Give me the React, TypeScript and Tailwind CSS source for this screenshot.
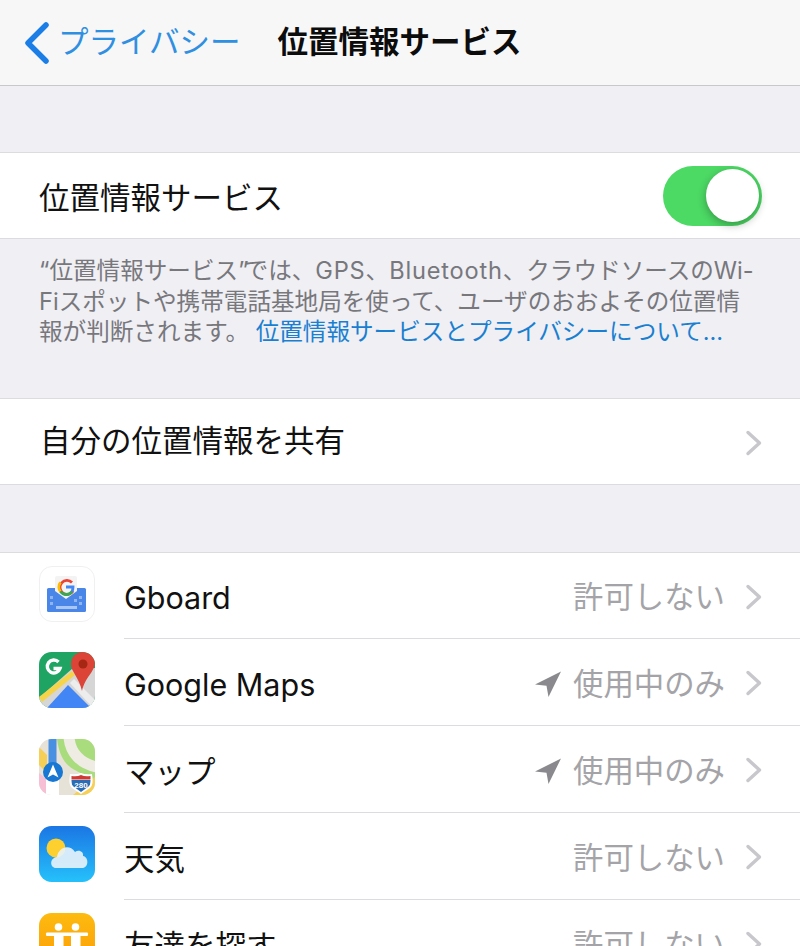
import { ReactNode } from 'react';

const fontStack = { fontFamily: 'Inter, "Noto Sans CJK JP", sans-serif' };

function Chevron() {
  return (
    <svg width="18" height="26" viewBox="0 0 18 26" className="mt-[2px] shrink-0">
      <path d="M3 2.5 L14.5 13 L3 23.5" fill="none" stroke="#c7c7cc" strokeWidth="3.4" strokeLinecap="round" strokeLinejoin="round" />
    </svg>
  );
}

function LocationArrow() {
  return (
    <svg width="28" height="28" viewBox="0 0 28 28" className="shrink-0">
      <path d="M27 1.5 L1 14.5 L12.5 15.8 L14.5 27 Z" fill="#8a8a8e" />
    </svg>
  );
}

function GboardIcon() {
  return (
    <svg width="56" height="56" viewBox="0 0 56 56" className="block">
      <rect x="0.5" y="0.5" width="55" height="55" rx="12.5" fill="#fff" stroke="#f0f0f0" />
      <rect x="8" y="22" width="39" height="24" rx="1.5" fill="#4a86e8" />
      <path d="M16 12 Q16 10 18 10 H36 Q38 10 38 12 V25 L27 33 L16 25 Z" fill="#f3f3f3" />
      <path d="M33 16.500 A7 7 0 1 0 34 25" fill="none" stroke="#ea4335" strokeWidth="2.800" />
      <path d="M21.500 16.500 A7 7 0 0 0 21.500 25.500" fill="none" stroke="#fbbc05" strokeWidth="2.800" />
      <path d="M21.500 25.500 A7 7 0 0 0 33 25.500" fill="none" stroke="#34a853" strokeWidth="2.800" />
      <path d="M27 21 H34 Q34 23.500 33 25.500" fill="none" stroke="#4285f4" strokeWidth="2.800" />
      <g fill="#8fb4ee">
        <rect x="11" y="30" width="3" height="3" />
        <rect x="40" y="30" width="3" height="3" />
        <rect x="35" y="33" width="3" height="3" />
        <rect x="11" y="36" width="3" height="3" />
        <rect x="40" y="36" width="3" height="3" />
      </g>
      <rect x="17" y="40" width="21" height="3" fill="#a9c6f4" />
    </svg>
  );
}

function MapsIcon() {
  return (
    <svg width="56" height="56" viewBox="0 0 56 56" className="block">
      <defs>
        <clipPath id="maps-clip"><rect width="56" height="56" rx="12.500" /></clipPath>
      </defs>
      <g clipPath="url(#maps-clip)">
        <rect width="56" height="56" fill="#1fa463" />
        <path d="M0 56 V46 L34 16 H56 V56 Z" fill="#d6d6d6" />
        <path d="M8 56 L29 33 L52 56 Z" fill="#4285f4" />
        <path d="M0 45 L33 19 L36 23 L3 50 Z" fill="#f6d44a" />
        <path d="M31 31 L35 27 L56 48 V56 H54 Z" fill="#ededed" />
        <path d="M44 0 C36 0 32 6 32 12 C32 20 40 25 43 39 C46 25 56 20 56 10 C56 4 51 0 44 0 Z" fill="#db4437" />
        <circle cx="44" cy="12" r="4.500" fill="#a52714" />
        <path d="M19.500 10 A6.500 6.500 0 1 0 21 16.500 H14.500" fill="none" stroke="#fff" strokeWidth="3.400" />
      </g>
    </svg>
  );
}

function AppleMapsIcon() {
  return (
    <svg width="56" height="56" viewBox="0 0 56 56" className="block">
      <defs>
        <clipPath id="amap-clip"><rect width="56" height="56" rx="12.500" /></clipPath>
      </defs>
      <g clipPath="url(#amap-clip)">
        <rect width="56" height="56" fill="#e6e2d8" />
        <path d="M18 0 H56 V42 L34 30 C24 24 20 14 18 0 Z" fill="#a9dc7c" />
        <path d="M30 -2 C31 14 42 25 58 28" fill="none" stroke="#efece3" strokeWidth="11" />
        <path d="M0 8 L8 16 V34 L0 26 Z" fill="#f6cf56" />
        <path d="M0 34 L7 40 V56 H0 Z" fill="#f7bfd4" />
        <rect x="7" y="38" width="13" height="18" fill="#ffffff" />
        <path d="M34 56 L56 38 V50 L50 56 Z" fill="#f6cf56" />
        <rect x="9.500" y="0" width="8" height="30" fill="#4a90e2" />
        <circle cx="14" cy="33" r="10" fill="#1877d2" />
        <path d="M14 25.500 L19.500 38.500 L14 35.500 L8.500 38.500 Z" fill="#fff" />
        <path d="M31 35 Q37 36 42 34 Q47 36 53 35 Q55 46 51 49 L42 55 L33 49 Q29 46 31 35 Z" fill="#fff" />
        <path d="M32.500 37 Q38 38 42 36 Q46 38 51.500 37 L51.500 40.500 H32.500 Z" fill="#cf3a35" />
        <path d="M32.500 41 H51.500 Q51.500 46 49.500 47.500 L42 53 L34.500 47.500 Q32.500 46 32.500 41 Z" fill="#2a6db5" />
        <text x="42" y="48.500" textAnchor="middle" fontSize="8" fontWeight="700" fill="#fff" fontFamily="Liberation Sans, sans-serif">280</text>
      </g>
    </svg>
  );
}

function WeatherIcon() {
  return (
    <svg width="56" height="56" viewBox="0 0 56 56" className="block">
      <defs>
        <linearGradient id="weather-bg" x1="0" y1="0" x2="0" y2="1">
          <stop offset="0" stopColor="#1b76e4" />
          <stop offset="1" stopColor="#25c1fb" />
        </linearGradient>
      </defs>
      <rect width="56" height="56" rx="12.500" fill="url(#weather-bg)" />
      <circle cx="17" cy="22" r="9.500" fill="#fdd02f" />
      <path d="M17 42 C11 42 10 32 18 31 C19 22 30 17 36 26 C40 23 45 26 44 30 C50 31 50 42 43 42 Z" fill="#e9f3fb" opacity="0.9" />
    </svg>
  );
}

function FindFriendsIcon() {
  return (
    <svg width="56" height="56" viewBox="0 0 56 56" className="block">
      <defs>
        <linearGradient id="friends-bg" x1="0" y1="0" x2="0" y2="1">
          <stop offset="0" stopColor="#fdbb0f" />
          <stop offset="1" stopColor="#fb9a08" />
        </linearGradient>
      </defs>
      <rect width="56" height="56" rx="12.500" fill="url(#friends-bg)" />
      <circle cx="19.500" cy="14" r="3.800" fill="#fff" />
      <circle cx="36.500" cy="14" r="3.800" fill="#fff" />
      <rect x="7" y="19.500" width="42" height="3.500" rx="1" fill="#fff" />
      <path d="M15 22 H24.500 V33 L27 47 H22 L19.500 38 L17 47 H12 L15 33 Z" fill="#fff" />
      <path d="M32 22 H41.500 V33 L44.500 47 H39.500 L36.500 38 L34 47 H29 L32 33 Z" fill="#fff" />
    </svg>
  );
}

function Row({ icon, label, location, value, first }: { icon: ReactNode; label: string; location?: boolean; value: string; first?: boolean }) {
  return (
    <div className={first ? 'flex h-[86px] pl-[39px]' : 'flex h-[87px] pl-[39px]'}>
      <div className="w-[85px] shrink-0 pt-[13px]">{icon}</div>
      <div className="flex h-full flex-1 items-center border-b border-[#dcdce0] pr-[37px]">
        <span className="mt-[6px] flex-1 text-[30.500px] leading-none text-[#111]">{label}</span>
        {location && <span className="mt-[4px] mr-[11px]"><LocationArrow /></span>}
        <span className="mt-[4px] mr-[20px] text-[30.400px] leading-none text-[#a4a4a8]">{value}</span>
        <Chevron />
      </div>
    </div>
  );
}

export default function App() {
  return (
    <div className="h-[946px] w-[800px] overflow-hidden bg-[#efeff4]" style={fontStack}>
      <header className="flex h-[86px] items-center border-b border-[#c8c8cc] bg-[#f7f7f8] pl-[24px]">
        <svg width="26" height="42" viewBox="0 0 26 42" className="shrink-0">
          <path d="M22 3 L4 21 L22 39" fill="none" stroke="#1a7ee6" strokeWidth="5.500" strokeLinecap="round" strokeLinejoin="round" />
        </svg>
        <span className="ml-[8px] text-[30.500px] leading-none text-[#2f8fe0]">プライバシー</span>
        <h1 className="ml-[37px] text-[30.500px] leading-none font-bold text-[#0c0c0c]">位置情報サービス</h1>
      </header>

      <div className="h-[66px]" />

      <div className="flex h-[87px] items-center justify-between border-y border-[#dcdce0] bg-white pr-[38px] pl-[39px]">
        <span className="mt-[6px] text-[30.500px] leading-none text-[#111]">位置情報サービス</span>
        <div className="relative h-[60px] w-[99px] rounded-full bg-[#4cd964]">
          <div className="absolute top-[3px] right-[3px] h-[53px] w-[53px] rounded-full bg-white shadow-[0_3px_8px_rgba(0,0,0,0.3)]" />
        </div>
      </div>

      <p className="h-[159px] px-[39px] pt-[17px] text-[23.600px] leading-[30.500px] whitespace-nowrap text-[#77777c]">
        “位置情報サービス<span className="tracking-[-4px]">”</span>では、<span className="tracking-[0.8px]">GPS</span>、<span className="tracking-[0.8px]">Bluetooth</span>、クラウドソースのWi-
        <br />
        Fiスポットや携帯電話基地局を使って、ユーザのおおよその位置情
        <br />
        報が判断されます。 <span className="text-[#1a7fd0]">位置情報サービスとプライバシーについて...</span>
      </p>

      <div className="flex h-[87px] items-center justify-between border-y border-[#dcdce0] bg-white pr-[37px] pl-[40px]">
        <span className="text-[30.500px] leading-none text-[#111]">自分の位置情報を共有</span>
        <Chevron />
      </div>

      <div className="h-[67px]" />

      <div className="border-t border-[#dcdce0] bg-white">
        <Row first icon={<GboardIcon />} label="Gboard" value="許可しない" />
        <Row icon={<MapsIcon />} label="Google Maps" location value="使用中のみ" />
        <Row icon={<AppleMapsIcon />} label="マップ" location value="使用中のみ" />
        <Row icon={<WeatherIcon />} label="天気" value="許可しない" />
        <Row icon={<FindFriendsIcon />} label="友達を探す" value="許可しない" />
      </div>
    </div>
  );
}
